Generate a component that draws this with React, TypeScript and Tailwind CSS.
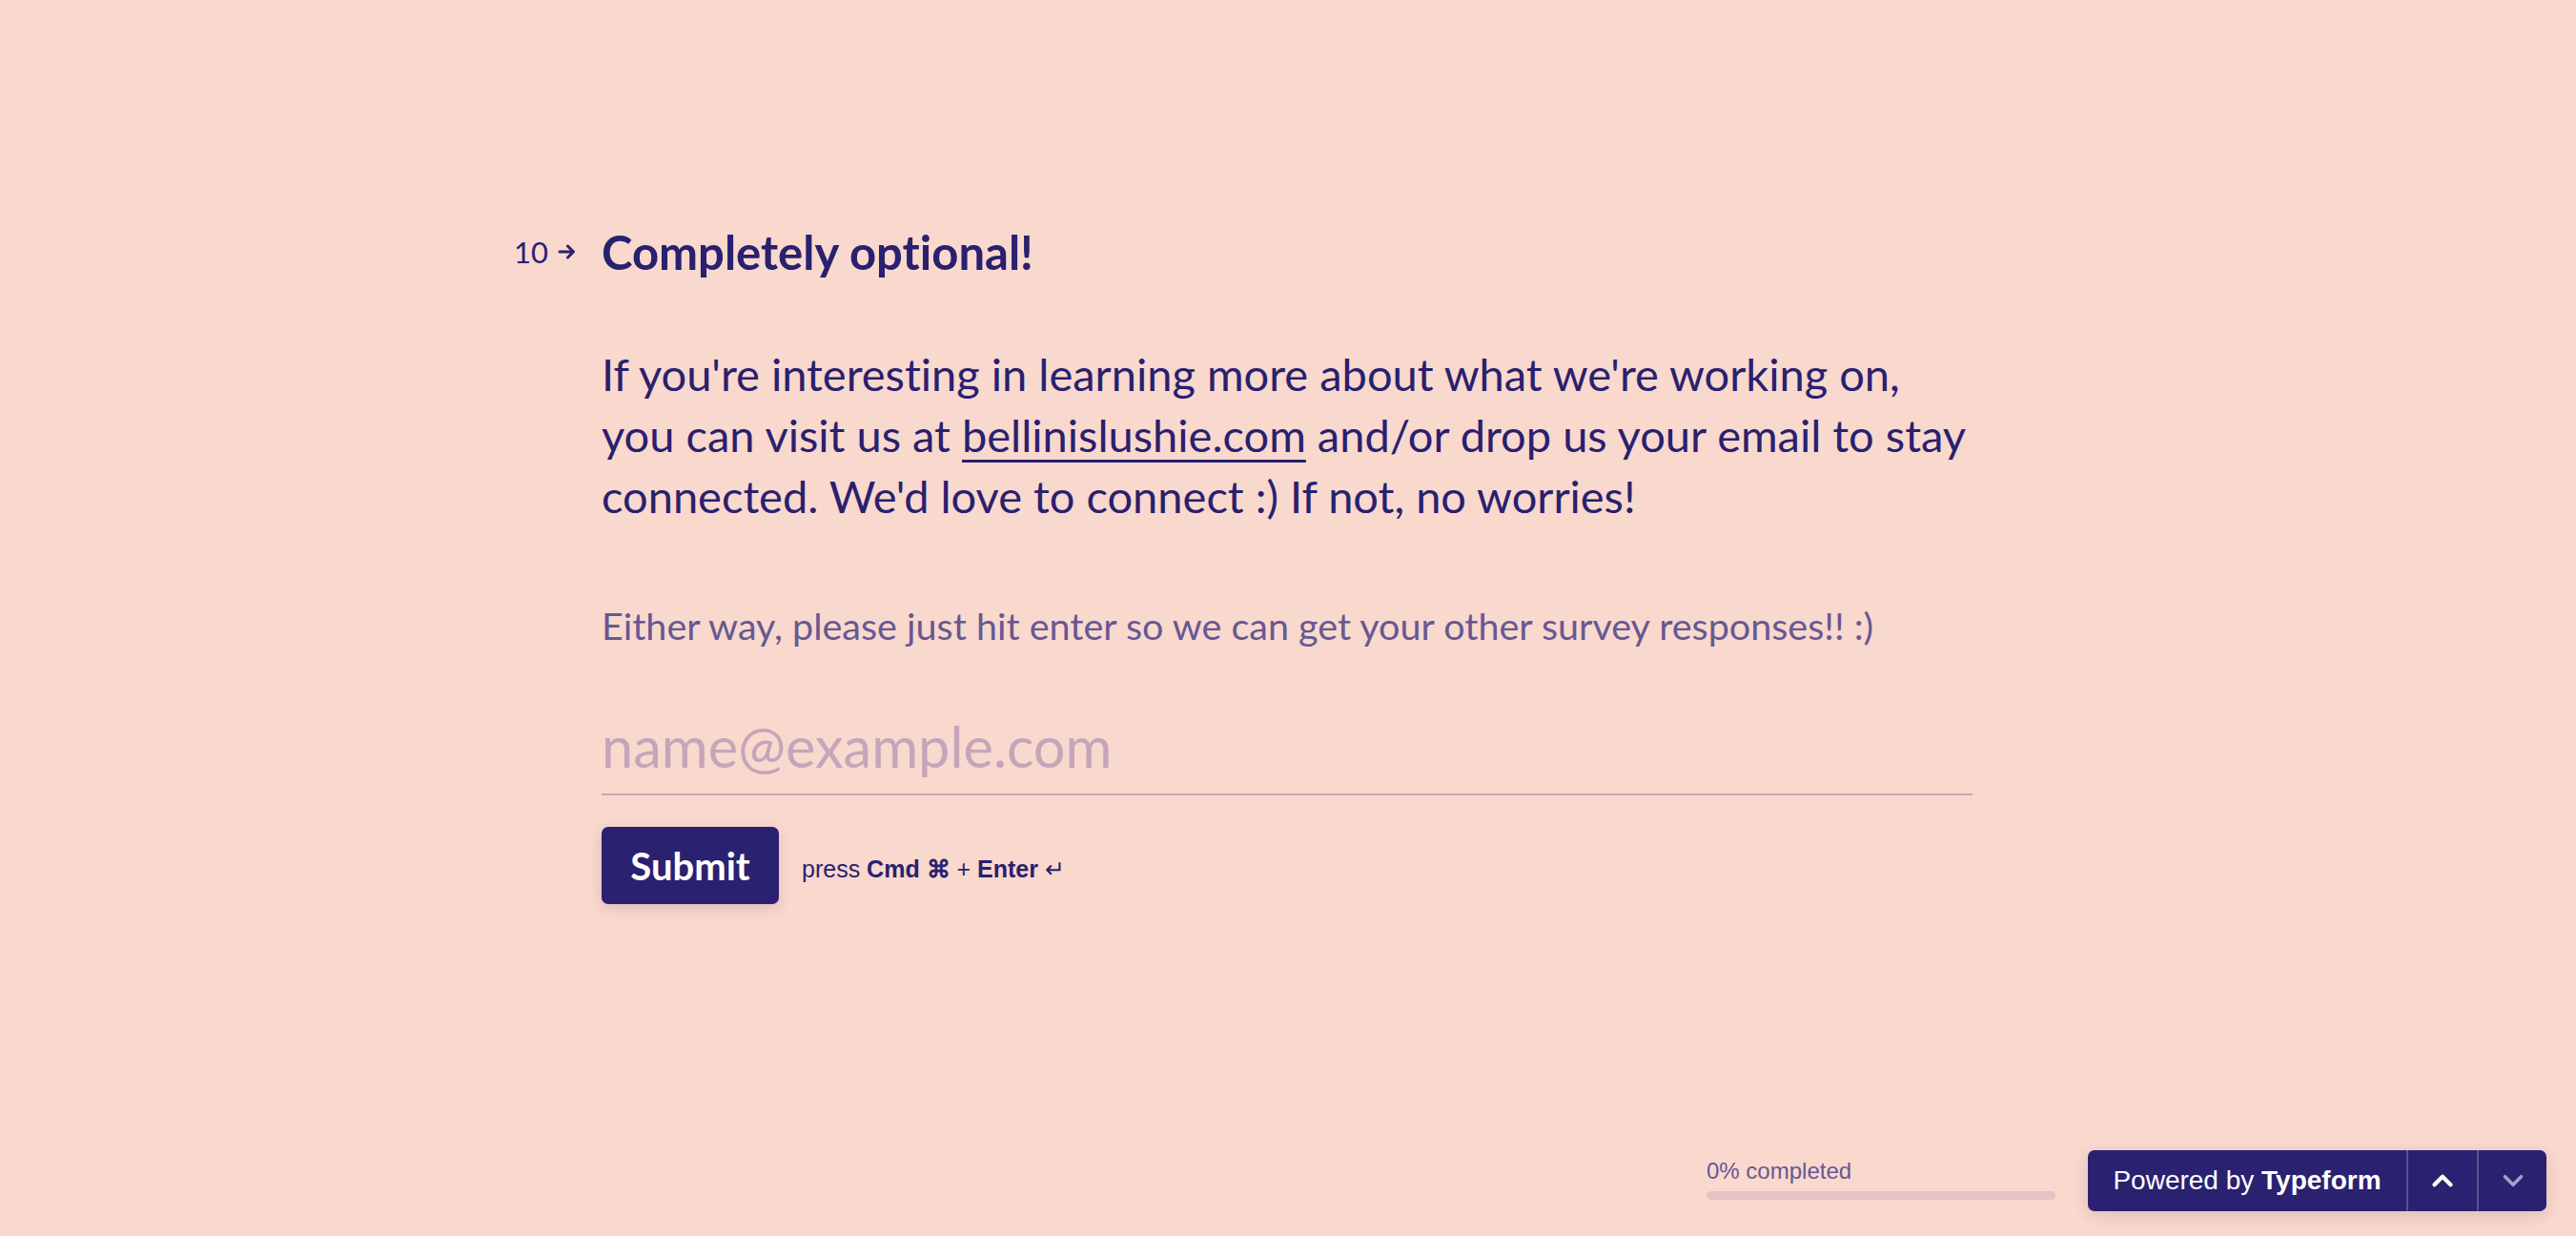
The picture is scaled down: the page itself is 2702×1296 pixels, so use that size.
import { ChevronUp, ChevronDown } from "lucide-react";

const lato = "font-['Lato',sans-serif] [font-variant-ligatures:none]";
const sans = "font-['Liberation_Sans',Arial,sans-serif]";

function ArrowIcon() {
  return (
    <svg width="20" height="18" viewBox="0 0 20 18" fill="none" className="text-[#29206f]">
      <path d="M2 9h14" stroke="currentColor" strokeWidth="3" strokeLinecap="round" />
      <path d="M10.5 3l6 6-6 6" stroke="currentColor" strokeWidth="3" strokeLinecap="round" strokeLinejoin="round" />
    </svg>
  );
}

export default function App() {
  return (
    <div className={`h-screen w-full bg-[#f9d8ce] flex flex-col text-[#29206f] ${lato}`}>
      {/* Question */}
      <div className="flex pt-[232px] pl-[539px]">
        <div className="w-[92px] shrink-0 flex items-center h-[64px] gap-[10px]">
          <span className="text-[31px] leading-none">10</span>
          <ArrowIcon />
        </div>

        <div className="w-[1438px]">
          <div className="text-[47px] leading-[64px] -mr-[10px]">
            <p className="font-bold text-[49px]">Completely optional!</p>
            <div className="h-[64px]" />
            <p>
              If you're interesting in learning more about what we're working on, you can visit us at{" "}
              <a className="underline decoration-[3px] underline-offset-[8px]">bellinislushie.com</a> and/or drop us your
              email to stay connected. We'd love to connect :) If not, no worries!
            </p>
          </div>

          <p className="mt-[80px] text-[39.5px] leading-[48px] text-[#675892]">
            Either way, please just hit enter so we can get your other survey responses!! :)
          </p>

          {/* Email input */}
          <div className="mt-[66px] border-b-2 border-[#c6a6b8] pb-[14px]">
            <input
              placeholder="name@example.com"
              className="w-full bg-transparent outline-none text-[59.5px] leading-[72px] placeholder:text-[#c4a5b9]"
            />
          </div>

          <div className="mt-[33px] flex items-center gap-[24px]">
            <button className="w-[186px] h-[81px] rounded-[7px] bg-[#2b2171] text-white font-bold text-[40px] shadow-[0_4px_14px_rgba(80,30,60,0.15)]">
              Submit
            </button>
            <span className={`${sans} text-[25px] mt-[8px]`}>
              press <b>Cmd ⌘</b> + <b>Enter</b> ↵
            </span>
          </div>
        </div>
      </div>

      {/* Footer */}
      <div className="mt-auto flex justify-end items-end pr-[31px] pb-[26px] gap-[34px]">
        <div className={`${sans} mb-[12px]`}>
          <div className="text-[24px] leading-none text-[#675892]">0% completed</div>
          <div className="mt-[9px] w-[366px] h-[9px] rounded-full bg-[#e8c3c6]"></div>
        </div>
        <div className="flex h-[64px] rounded-[7px] bg-[#2b2171] shadow-[0_4px_16px_rgba(80,30,60,0.15)] overflow-hidden">
          <div className={`${sans} w-[334px] flex items-center justify-center text-white text-[28px]`}>
            Powered by&nbsp;<b>Typeform</b>
          </div>
          <div className="w-[74px] border-l-2 border-[#5b5290] flex items-center justify-center">
            <ChevronUp size={34} strokeWidth={3} className="text-white" />
          </div>
          <div className="w-[73px] border-l-2 border-[#5b5290] flex items-center justify-center">
            <ChevronDown size={34} strokeWidth={2.5} className="text-[#a59fc9]" />
          </div>
        </div>
      </div>
    </div>
  );
}
